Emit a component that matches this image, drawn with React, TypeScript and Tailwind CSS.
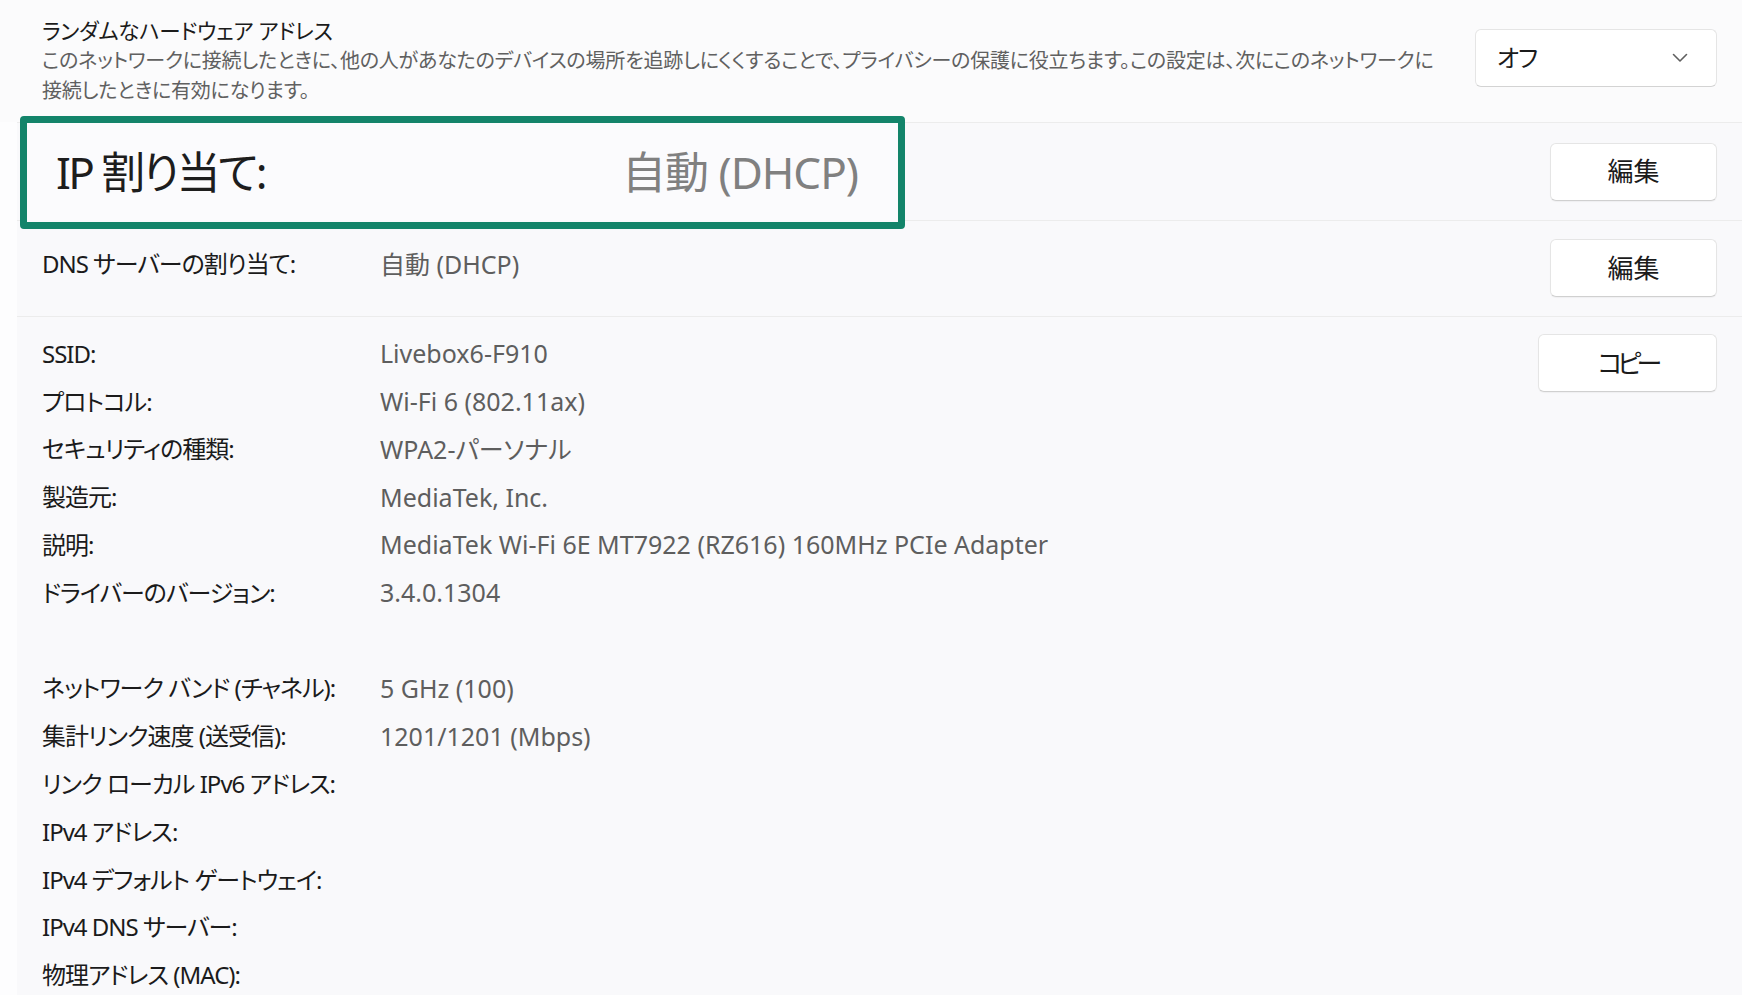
import React from "react";

const rows1: [string, string][] = [
  ["SSID:", "Livebox6-F910"],
  ["プロトコル:", "Wi-Fi 6 (802.11ax)"],
  ["セキュリティの種類:", "WPA2-パーソナル"],
  ["製造元:", "MediaTek, Inc."],
  ["説明:", "MediaTek Wi-Fi 6E MT7922 (RZ616) 160MHz PCIe Adapter"],
  ["ドライバーのバージョン:", "3.4.0.1304"],
];

const rows2: [string, string][] = [
  ["ネットワーク バンド (チャネル):", "5 GHz (100)"],
  ["集計リンク速度 (送受信):", "1201/1201 (Mbps)"],
  ["リンク ローカル IPv6 アドレス:", ""],
  ["IPv4 アドレス:", ""],
  ["IPv4 デフォルト ゲートウェイ:", ""],
  ["IPv4 DNS サーバー:", ""],
  ["物理アドレス (MAC):", ""],
];

function Btn({ label, w, track }: { label: string; w: string; track: string }) {
  return (
    <div
      className={`${w} h-[58px] flex items-center justify-center rounded-[6px] bg-white border border-[#e5e5e5] border-b-[#d0d0d0] text-[26px] text-[#1b1b1b] shadow-[0_1px_1px_rgba(0,0,0,0.04)]`}
    >
      <span className={track}>{label}</span>
    </div>
  );
}

function Row({ k, v }: { k: string; v: string }) {
  return (
    <div className="flex h-[47.8px] items-center">
      <div className="w-[338px] text-[24px] tracking-[-1px] text-[#1b1b1b] whitespace-nowrap">{k}</div>
      <div className="text-[25px] text-[#5e5e5e] whitespace-nowrap">{v}</div>
    </div>
  );
}

export default function App() {
  return (
    <div className="w-[1742px] h-[995px] overflow-hidden bg-[#fdfdfe] font-['Noto_Sans','Noto_Sans_CJK_JP',sans-serif] [font-feature-settings:'palt'] text-[#1b1b1b]">
      {/* Random hardware address */}
      <div className="flex h-[122px] pr-[25px] bg-[#fbfbfc]">
        <div className="flex-1 pl-[42px] pt-[18px]">
          <div className="text-[21.5px] leading-[26px] tracking-[-0.3px]">ランダムなハードウェア アドレス</div>
          <div className="mt-[2px] text-[20px] leading-[30px] text-[#606060] tracking-[-0.2px]">
            <div className="whitespace-nowrap">
              このネットワークに接続したときに、他の人があなたのデバイスの場所を追跡しにくくすることで、プライバシーの保護に役立ちます。この設定は、次にこのネットワークに
            </div>
            <div className="whitespace-nowrap">接続したときに有効になります。</div>
          </div>
        </div>
        <div className="mt-[29px] w-[242px] h-[58px] rounded-[6px] bg-white border border-[#e5e5e5] border-b-[#d3d3d3] flex items-center justify-between pl-[21px] pr-[28px]">
          <span className="text-[24px] tracking-[-1px] text-[#1b1b1b]">オフ</span>
          <svg width="16" height="10" viewBox="0 0 16 10" fill="none">
            <path d="M1.5 1.5 L8 8 L14.5 1.5" stroke="#5f5f5f" strokeWidth="1.6" strokeLinecap="round" strokeLinejoin="round" />
          </svg>
        </div>
      </div>

      <div className="ml-[17px] bg-[#f9f9fb]">
        {/* IP assignment */}
        <div className="flex h-[98px] items-center pr-[25px] border-t border-[#ececec]">
          <div className="relative z-10 ml-[3px] mt-[1px] w-[885px] h-[113px] shrink-0 rounded-[4px] border-[7px] border-[#13846a] bg-[#fbfbfd] flex items-center pl-[29px]">
            <div className="w-[566px] text-[44px] text-[#1d1d1d] tracking-[-2.6px] whitespace-nowrap">IP 割り当て:</div>
            <div className="text-[44px] text-[#808080] tracking-[-1px] whitespace-nowrap">自動 (DHCP)</div>
          </div>
          <div className="flex-1" />
          <Btn label="編集" w="w-[167px]" track="" />
        </div>

        {/* DNS */}
        <div className="flex h-[96px] pr-[25px] border-t border-[#ececec]">
          <div className="flex-1 flex pl-[25px] pt-[28px] leading-[30px]">
            <div className="w-[338px] text-[24px] tracking-[-1px] whitespace-nowrap">DNS サーバーの割り当て:</div>
            <div className="text-[25px] text-[#5e5e5e] whitespace-nowrap">自動 (DHCP)</div>
          </div>
          <div className="mt-[18px]">
            <Btn label="編集" w="w-[167px]" track="" />
          </div>
        </div>

        {/* Properties */}
        <div className="flex pr-[25px] border-t border-[#ececec] h-[680px]">
          <div className="flex-1 pl-[25px] pt-[13px]">
            {rows1.map(([k, v]) => (
              <Row key={k} k={k} v={v} />
            ))}
            <div className="h-[47.8px]" />
            {rows2.map(([k, v]) => (
              <Row key={k} k={k} v={v} />
            ))}
          </div>
          <div className="mt-[17px]">
            <Btn label="コピー" w="w-[179px]" track="tracking-[-5px]" />
          </div>
        </div>
      </div>
    </div>
  );
}
